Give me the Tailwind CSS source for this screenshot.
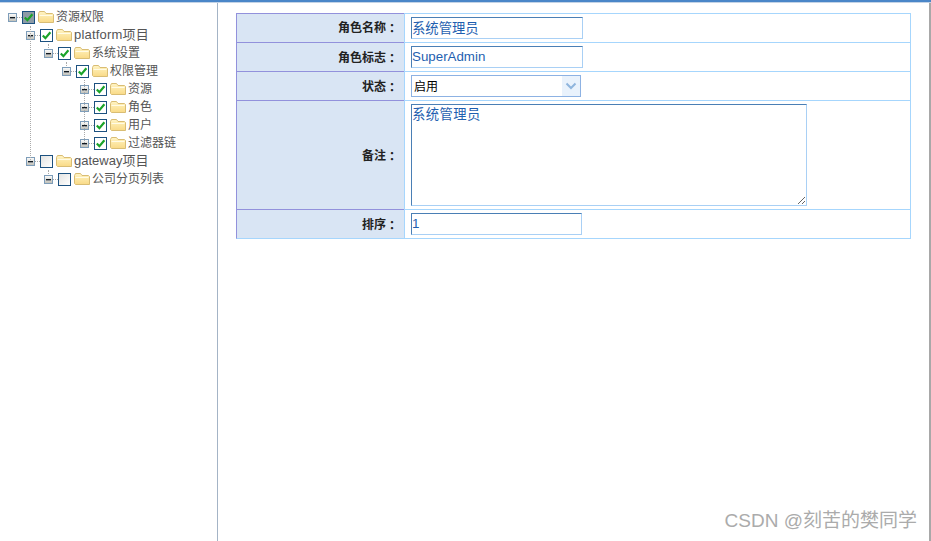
<!DOCTYPE html>
<html lang="en">
<head>
    <meta charset="UTF-8">
    <meta name="viewport" content="width=device-width, initial-scale=1.0">
    <title>角色管理</title>
    <script src="https://cdn.jsdelivr.net/npm/@tailwindcss/browser@4"></script>
</head>
<body class="relative h-screen overflow-hidden bg-white font-['Liberation_Sans','Noto_Sans_CJK_SC',sans-serif] text-[12px]">

    <!-- icons -->
    <svg width="0" height="0" class="absolute">
        <defs>
            <linearGradient id="exp" x1="0" y1="0" x2="0" y2="1"><stop offset="0" stop-color="#ffffff"/><stop offset="1" stop-color="#bdbdb5"/></linearGradient>
            <linearGradient id="fold" x1="0" y1="0" x2="0" y2="1"><stop offset="0" stop-color="#fff4c4"/><stop offset="1" stop-color="#f9da86"/></linearGradient>
            <symbol id="minus" viewBox="0 0 9 9">
                <rect x="0.5" y="0.5" width="8" height="8" fill="url(#exp)" stroke="#7e9db9"/>
                <rect x="2" y="4" width="5" height="1" fill="#10181f"/>
                <rect x="2" y="5" width="5" height="1" fill="#8b8f93"/>
            </symbol>
            <symbol id="check" viewBox="0 0 11 11">
                <path d="M1.8 5.5 L4.4 8.2 L9.4 2.2" fill="none" stroke="#1aa329" stroke-width="2.2"/>
            </symbol>
            <symbol id="folder" viewBox="0 0 16 12">
                <path d="M0.5 2.5 L1.5 0.5 H6.5 L8 2.5 H14.5 L15.5 3.5 V11.5 H1.5 L0.5 10.5 Z" fill="url(#fold)" stroke="#d9bd74"/>
                <path d="M1.5 4.5 H14.5" stroke="#fffbe6" fill="none"/>
            </symbol>
        </defs>
    </svg>

    <div class="h-[3px] border-b border-[#c3d3e6] bg-[#4a86c8]"></div>

    <div class="flex h-[538px]">
        <!-- tree -->
        <div class="w-[218px] shrink-0 border-r border-[#a4b4c6] pt-[5px] text-[#555]">
            <div class="flex h-[18px] items-center">
                <svg class="ml-[8px] h-[9px] w-[9px]"><use href="#minus"/></svg>
                <span class="w-[5px] border-t border-dotted border-[#aaa]"></span>
                <span class="h-[13px] w-[13px] border border-[#1c5180] bg-[#8d9ba6]"><svg class="h-[11px] w-[11px]"><use href="#check"/></svg></span>
                <svg class="ml-[3px] h-[12px] w-[16px]"><use href="#folder"/></svg>
                <span class="ml-[2px]">资源权限</span>
            </div>
            <div class="relative pl-[18px]">
                <span class="absolute left-[30px] top-0 h-[134px] border-l border-dotted border-[#aaa]"></span>
                <div class="flex h-[18px] items-center">
                    <svg class="ml-[8px] h-[9px] w-[9px]"><use href="#minus"/></svg>
                    <span class="w-[5px] border-t border-dotted border-[#aaa]"></span>
                    <span class="h-[13px] w-[13px] border border-[#1c5180] bg-white"><svg class="h-[11px] w-[11px]"><use href="#check"/></svg></span>
                    <svg class="ml-[3px] h-[12px] w-[16px]"><use href="#folder"/></svg>
                    <span class="ml-[2px] text-[13px] tracking-[0.2px]">platform项目</span>
                </div>
                <div class="relative pl-[18px]">
                    <span class="absolute left-[30px] top-0 h-[4px] border-l border-dotted border-[#aaa]"></span>
                    <div class="flex h-[18px] items-center">
                        <svg class="ml-[8px] h-[9px] w-[9px]"><use href="#minus"/></svg>
                        <span class="w-[5px] border-t border-dotted border-[#aaa]"></span>
                        <span class="h-[13px] w-[13px] border border-[#1c5180] bg-white"><svg class="h-[11px] w-[11px]"><use href="#check"/></svg></span>
                        <svg class="ml-[3px] h-[12px] w-[16px]"><use href="#folder"/></svg>
                        <span class="ml-[2px]">系统设置</span>
                    </div>
                    <div class="relative pl-[18px]">
                        <span class="absolute left-[30px] top-0 h-[4px] border-l border-dotted border-[#aaa]"></span>
                        <div class="flex h-[18px] items-center">
                            <svg class="ml-[8px] h-[9px] w-[9px]"><use href="#minus"/></svg>
                            <span class="w-[5px] border-t border-dotted border-[#aaa]"></span>
                            <span class="h-[13px] w-[13px] border border-[#1c5180] bg-white"><svg class="h-[11px] w-[11px]"><use href="#check"/></svg></span>
                            <svg class="ml-[3px] h-[12px] w-[16px]"><use href="#folder"/></svg>
                            <span class="ml-[2px]">权限管理</span>
                        </div>
                        <div class="relative pl-[18px]">
                            <span class="absolute left-[30px] top-0 h-[63px] border-l border-dotted border-[#aaa]"></span>
                            <div class="flex h-[18px] items-center">
                                <svg class="ml-[8px] h-[9px] w-[9px]"><use href="#minus"/></svg>
                                <span class="w-[5px] border-t border-dotted border-[#aaa]"></span>
                                <span class="h-[13px] w-[13px] border border-[#1c5180] bg-white"><svg class="h-[11px] w-[11px]"><use href="#check"/></svg></span>
                                <svg class="ml-[3px] h-[12px] w-[16px]"><use href="#folder"/></svg>
                                <span class="ml-[2px]">资源</span>
                            </div>
                            <div class="flex h-[18px] items-center">
                                <svg class="ml-[8px] h-[9px] w-[9px]"><use href="#minus"/></svg>
                                <span class="w-[5px] border-t border-dotted border-[#aaa]"></span>
                                <span class="h-[13px] w-[13px] border border-[#1c5180] bg-white"><svg class="h-[11px] w-[11px]"><use href="#check"/></svg></span>
                                <svg class="ml-[3px] h-[12px] w-[16px]"><use href="#folder"/></svg>
                                <span class="ml-[2px]">角色</span>
                            </div>
                            <div class="flex h-[18px] items-center">
                                <svg class="ml-[8px] h-[9px] w-[9px]"><use href="#minus"/></svg>
                                <span class="w-[5px] border-t border-dotted border-[#aaa]"></span>
                                <span class="h-[13px] w-[13px] border border-[#1c5180] bg-white"><svg class="h-[11px] w-[11px]"><use href="#check"/></svg></span>
                                <svg class="ml-[3px] h-[12px] w-[16px]"><use href="#folder"/></svg>
                                <span class="ml-[2px]">用户</span>
                            </div>
                            <div class="flex h-[18px] items-center">
                                <svg class="ml-[8px] h-[9px] w-[9px]"><use href="#minus"/></svg>
                                <span class="w-[5px] border-t border-dotted border-[#aaa]"></span>
                                <span class="h-[13px] w-[13px] border border-[#1c5180] bg-white"><svg class="h-[11px] w-[11px]"><use href="#check"/></svg></span>
                                <svg class="ml-[3px] h-[12px] w-[16px]"><use href="#folder"/></svg>
                                <span class="ml-[2px]">过滤器链</span>
                            </div>
                        </div>
                    </div>
                </div>
                <div class="flex h-[18px] items-center">
                    <svg class="ml-[8px] h-[9px] w-[9px]"><use href="#minus"/></svg>
                    <span class="w-[5px] border-t border-dotted border-[#aaa]"></span>
                    <span class="h-[13px] w-[13px] border border-[#1c5180] bg-gradient-to-br from-[#e4e4e2] to-white"></span>
                    <svg class="ml-[3px] h-[12px] w-[16px]"><use href="#folder"/></svg>
                    <span class="ml-[2px] text-[13px]">gateway项目</span>
                </div>
                <div class="relative pl-[18px]">
                    <span class="absolute left-[30px] top-0 h-[4px] border-l border-dotted border-[#aaa]"></span>
                    <div class="flex h-[18px] items-center">
                        <svg class="ml-[8px] h-[9px] w-[9px]"><use href="#minus"/></svg>
                        <span class="w-[5px] border-t border-dotted border-[#aaa]"></span>
                        <span class="h-[13px] w-[13px] border border-[#1c5180] bg-gradient-to-br from-[#e4e4e2] to-white"></span>
                        <svg class="ml-[3px] h-[12px] w-[16px]"><use href="#folder"/></svg>
                        <span class="ml-[2px]">公司分页列表</span>
                    </div>
                </div>
            </div>
        </div>

        <!-- form -->
        <div class="flex-1 pl-[18px] pt-[10px]">
            <div class="grid w-[675px] grid-cols-[168px_507px] grid-rows-[29px_29px_29px_109px_30px]">
                <div class="flex items-center justify-end border-l border-t border-[#9291dc] bg-[#d9e5f4] pr-[6px] font-bold text-[#222]">角色名称<span class="font-['Noto_Sans_CJK_TC']">：</span></div>
                <div class="flex items-center border-x border-t border-[#a6d6fd] pl-[6px]">
                    <input value="系统管理员" class="h-[22px] w-[172px] border border-[#a9d0f5] border-l-[#4a7fb5] border-t-[#4a7fb5] pb-[2px] text-[13.33px] text-[#1f5fb0] outline-none">
                </div>
                <div class="flex items-center justify-end border-l border-t border-[#9291dc] bg-[#d9e5f4] pr-[6px] pt-[2px] font-bold text-[#222]">角色标志<span class="font-['Noto_Sans_CJK_TC']">：</span></div>
                <div class="flex items-center border-x border-t border-[#a6d6fd] pl-[6px]">
                    <input value="SuperAdmin" class="h-[22px] w-[172px] border border-[#a9d0f5] border-l-[#4a7fb5] border-t-[#4a7fb5] pb-[2px] text-[13.33px] text-[#1f5fb0] outline-none">
                </div>
                <div class="flex items-center justify-end border-l border-t border-[#9291dc] bg-[#d9e5f4] pr-[6px] pt-[2px] font-bold text-[#222]">状态<span class="font-['Noto_Sans_CJK_TC']">：</span></div>
                <div class="flex items-center border-x border-t border-[#a6d6fd] pl-[6px]">
                    <div class="relative h-[22px] w-[170px]">
                        <select class="h-full w-full appearance-none border border-[#8db2e3] bg-white pl-[2px] pt-px text-[12px] text-black outline-none">
                            <option>启用</option>
                        </select>
                        <span class="absolute bottom-px right-px top-px flex w-[18px] items-center justify-center bg-[#e9f2fc]">
                            <svg width="12" height="8" viewBox="0 0 12 8"><path d="M1.5 1.5 L6 6 L10.5 1.5" fill="none" stroke="#8fb5dd" stroke-width="2"/></svg>
                        </span>
                    </div>
                </div>
                <div class="flex items-center justify-end border-l border-t border-[#9291dc] bg-[#d9e5f4] pr-[6px] pt-[2px] font-bold text-[#222]">备注<span class="font-['Noto_Sans_CJK_TC']">：</span></div>
                <div class="flex items-center border-x border-t border-[#a6d6fd] pl-[6px]">
                    <textarea class="block h-[102px] w-[396px] border border-[#a9d0f5] border-l-[#4a7fb5] border-t-[#4a7fb5] pt-px text-[13.33px] leading-[18px] tracking-[0.4px] text-[#1f5fb0] outline-none">系统管理员</textarea>
                </div>
                <div class="flex items-center justify-end border-y border-l border-[#9291dc] border-b-[#a6d6fd] bg-[#d9e5f4] pr-[6px] pt-[2px] font-bold text-[#222]">排序<span class="font-['Noto_Sans_CJK_TC']">：</span></div>
                <div class="flex items-center border border-[#a6d6fd] pl-[6px]">
                    <input value="1" class="h-[22px] w-[171px] border border-[#a9d0f5] border-l-[#4a7fb5] border-t-[#4a7fb5] pb-[2px] text-[13.33px] text-[#1f5fb0] outline-none">
                </div>
            </div>
        </div>

        <div class="w-[2px] shrink-0 bg-[#a8a8a8]"></div>
    </div>

    <!-- watermark -->
    <div class="absolute bottom-[8px] right-[14px] text-[19px] leading-[24px] text-[#ababab]">CSDN @刻苦的樊同学</div>

</body>
</html>
